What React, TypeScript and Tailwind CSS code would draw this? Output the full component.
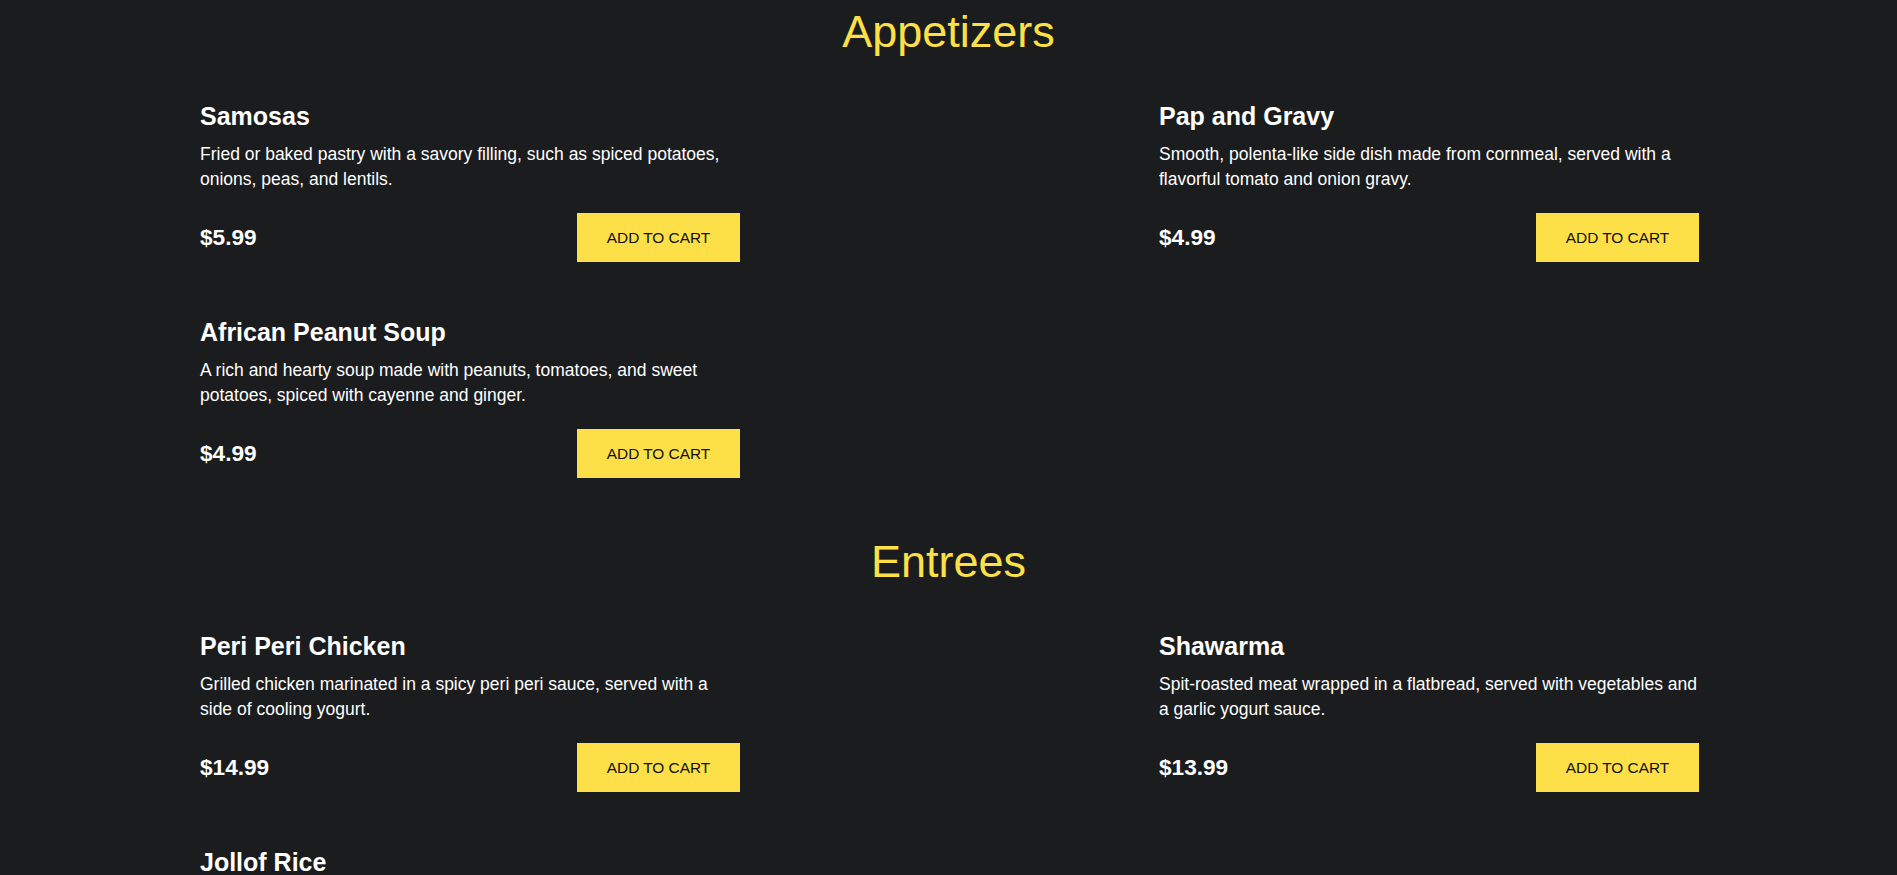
type MenuItem = {
  name: string;
  description: string;
  price: string;
};

type Section = {
  title: string;
  items: MenuItem[];
};

const menu: Section[] = [
  {
    title: 'Appetizers',
    items: [
      {
        name: 'Samosas',
        description:
          'Fried or baked pastry with a savory filling, such as spiced potatoes, onions, peas, and lentils.',
        price: '$5.99',
      },
      {
        name: 'Pap and Gravy',
        description:
          'Smooth, polenta-like side dish made from cornmeal, served with a flavorful tomato and onion gravy.',
        price: '$4.99',
      },
      {
        name: 'African Peanut Soup',
        description:
          'A rich and hearty soup made with peanuts, tomatoes, and sweet potatoes, spiced with cayenne and ginger.',
        price: '$4.99',
      },
    ],
  },
  {
    title: 'Entrees',
    items: [
      {
        name: 'Peri Peri Chicken',
        description:
          'Grilled chicken marinated in a spicy peri peri sauce, served with a side of cooling yogurt.',
        price: '$14.99',
      },
      {
        name: 'Shawarma',
        description:
          'Spit-roasted meat wrapped in a flatbread, served with vegetables and a garlic yogurt sauce.',
        price: '$13.99',
      },
      {
        name: 'Jollof Rice',
        description:
          'A one-pot rice dish cooked in a rich tomato and pepper sauce, served with fried plantains.',
        price: '$12.99',
      },
    ],
  },
];

function MenuCard({ item }: { item: MenuItem }) {
  return (
    <div className="flex w-[541px] flex-col">
      <h3 className="text-[25px] font-bold leading-[28px] text-white">{item.name}</h3>
      <p className="mt-[12px] text-[17.5px] leading-[25px] text-white">{item.description}</p>
      <div className="mt-[21px] flex items-center justify-between pr-px">
        <span className="text-[22.6px] font-bold text-white">{item.price}</span>
        <button className="flex h-[49px] w-[163px] items-center justify-center bg-[#fde047] text-[15.4px] text-[#111111]">
          ADD TO CART
        </button>
      </div>
    </div>
  );
}

export default function App() {
  return (
    <div
      className="min-h-screen bg-[#1b1c1e] pt-[7px] pb-[60px]"
      style={{ fontFamily: '"Liberation Sans", Arial, sans-serif' }}
    >
      {menu.map(section => (
        <section key={section.title} className="mb-[59px]">
          <h2 className="text-center text-[45px] leading-[50px] text-[#fde047]">{section.title}</h2>
          <div className="mt-[45px] grid grid-cols-[541px_541px] justify-between gap-y-[56px] pl-[200px] pr-[197px]">
            {section.items.map(item => (
              <MenuCard key={item.name} item={item} />
            ))}
          </div>
        </section>
      ))}
    </div>
  );
}
